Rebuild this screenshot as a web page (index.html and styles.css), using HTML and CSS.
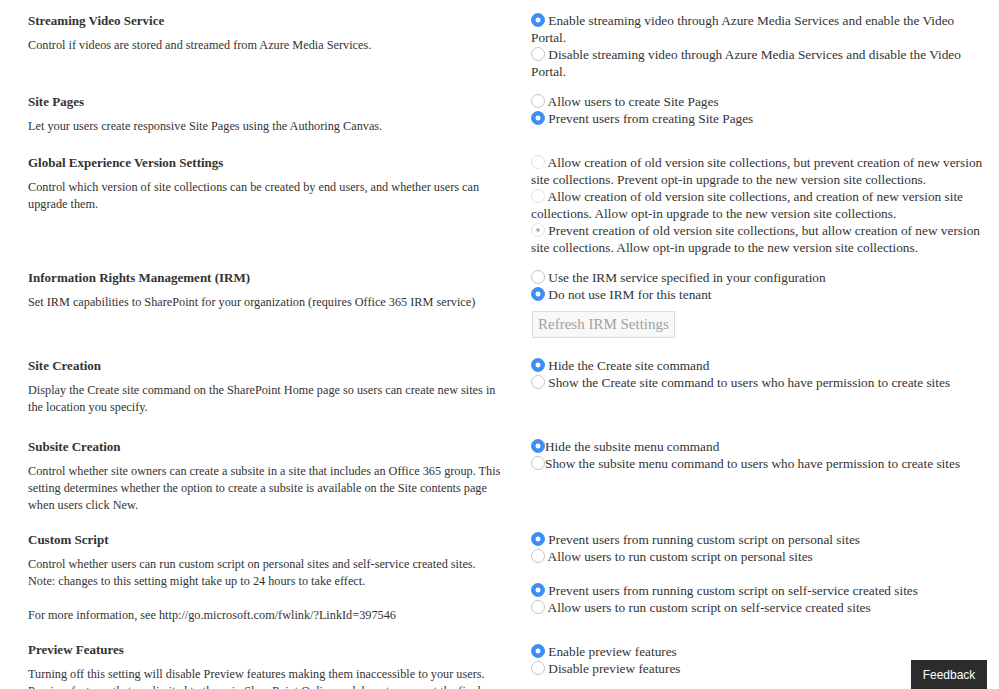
FILE: index.html
```html
<!DOCTYPE html>
<html lang="en">
<head>
    <meta charset="UTF-8">
    <meta name="viewport" content="width=device-width, initial-scale=1.0">
    <title>Settings</title>
    <link rel="stylesheet" href="styles.css">
</head>
<body>

    <div class="settings">

        <section class="setting">
            <div class="setting-info">
                <h3>Streaming Video Service</h3>
                <p>Control if videos are stored and streamed from Azure Media Services.</p>
            </div>
            <div class="setting-options">
                <label class="option"><input type="radio" name="video" checked> Enable streaming video through Azure Media Services and enable the Video Portal.</label>
                <label class="option"><input type="radio" name="video"> Disable streaming video through Azure Media Services and disable the Video Portal.</label>
            </div>
        </section>

        <section class="setting">
            <div class="setting-info">
                <h3>Site Pages</h3>
                <p>Let your users create responsive Site Pages using the Authoring Canvas.</p>
            </div>
            <div class="setting-options">
                <label class="option"><input type="radio" name="pages"> Allow users to create Site Pages</label>
                <label class="option"><input type="radio" name="pages" checked> Prevent users from creating Site Pages</label>
            </div>
        </section>

        <section class="setting">
            <div class="setting-info">
                <h3>Global Experience Version Settings</h3>
                <p>Control which version of site collections can be created by end users, and whether users can upgrade them.</p>
            </div>
            <div class="setting-options">
                <label class="option"><input type="radio" name="version" disabled> Allow creation of old version site collections, but prevent creation of new version site collections. Prevent opt-in upgrade to the new version site collections.</label>
                <label class="option"><input type="radio" name="version" disabled> Allow creation of old version site collections, and creation of new version site collections. Allow opt-in upgrade to the new version site collections.</label>
                <label class="option"><input type="radio" name="version" checked disabled> Prevent creation of old version site collections, but allow creation of new version site collections. Allow opt-in upgrade to the new version site collections.</label>
            </div>
        </section>

        <section class="setting">
            <div class="setting-info">
                <h3>Information Rights Management (IRM)</h3>
                <p>Set IRM capabilities to SharePoint for your organization (requires Office 365 IRM service)</p>
            </div>
            <div class="setting-options">
                <label class="option"><input type="radio" name="irm"> Use the IRM service specified in your configuration</label>
                <label class="option"><input type="radio" name="irm" checked> Do not use IRM for this tenant</label>
                <button class="refresh-btn" disabled>Refresh IRM Settings</button>
            </div>
        </section>

        <section class="setting">
            <div class="setting-info">
                <h3>Site Creation</h3>
                <p>Display the Create site command on the SharePoint Home page so users can create new sites in the location you specify.</p>
            </div>
            <div class="setting-options">
                <label class="option"><input type="radio" name="sitecreate" checked> Hide the Create site command</label>
                <label class="option"><input type="radio" name="sitecreate"> Show the Create site command to users who have permission to create sites</label>
            </div>
        </section>

        <section class="setting subsite">
            <div class="setting-info">
                <h3>Subsite Creation</h3>
                <p>Control whether site owners can create a subsite in a site that includes an Office 365 group. This setting determines whether the option to create a subsite is available on the Site contents page when users click New.</p>
            </div>
            <div class="setting-options tight">
                <label class="option"><input type="radio" name="subsite" checked>Hide the subsite menu command</label>
                <label class="option"><input type="radio" name="subsite">Show the subsite menu command to users who have permission to create sites</label>
            </div>
        </section>

        <section class="setting custom-script">
            <div class="setting-info">
                <h3>Custom Script</h3>
                <p>Control whether users can run custom script on personal sites and self-service created sites.<br>
                Note: changes to this setting might take up to 24 hours to take effect.<br><br>
                For more information, see http://go.microsoft.com/fwlink/?LinkId=397546</p>
            </div>
            <div class="setting-options">
                <div class="option-group">
                    <label class="option"><input type="radio" name="script-personal" checked> Prevent users from running custom script on personal sites</label>
                    <label class="option"><input type="radio" name="script-personal"> Allow users to run custom script on personal sites</label>
                </div>
                <div class="option-group">
                    <label class="option"><input type="radio" name="script-self" checked> Prevent users from running custom script on self-service created sites</label>
                    <label class="option"><input type="radio" name="script-self"> Allow users to run custom script on self-service created sites</label>
                </div>
            </div>
        </section>

        <section class="setting">
            <div class="setting-info">
                <h3>Preview Features</h3>
                <p>Turning off this setting will disable Preview features making them inaccessible to your users. Preview features that are limited to those in SharePoint Online and do not represent the final product.</p>
            </div>
            <div class="setting-options preview">
                <label class="option"><input type="radio" name="preview" checked> Enable preview features</label>
                <label class="option"><input type="radio" name="preview"> Disable preview features</label>
            </div>
        </section>

    </div>

    <button class="feedback-btn">Feedback</button>

</body>
</html>
```

FILE: styles.css
```css
body {
    font-family: 'Liberation Serif', 'Times New Roman', serif;
    color: #333;
    background: #fff;
    margin: 0;
    padding: 0;
}

.settings {
    padding: 12px 10px 0 28px;
}

.setting {
    display: grid;
    grid-template-columns: 474px 1fr;
    column-gap: 29px;
    align-items: start;
}

.setting-info h3 {
    margin: 0;
    font-size: 13px;
    line-height: 17px;
    font-weight: bold;
}

.setting-info p {
    margin: 8px 0 19px;
    font-size: 12.25px;
    line-height: 17px;
}

.setting.subsite {
    margin-top: 3px;
}

.setting.subsite .setting-info p,
.setting.custom-script .setting-info p {
    margin-bottom: 17px;
}

.setting-options {
    padding-bottom: 13px;
    font-size: 13.3px;
    line-height: 17px;
}

.setting-options.preview {
    padding-top: 2px;
}

.option {
    display: block;
}

.option-group + .option-group {
    margin-top: 17px;
}

/* mac style radios */
.option input {
    appearance: none;
    -webkit-appearance: none;
    width: 14px;
    height: 14px;
    margin: 0;
    border: 1px solid #c6c6c6;
    border-radius: 50%;
    background: #fff;
    vertical-align: -2px;
    box-sizing: border-box;
}

.option input:checked {
    border-color: #3b8ff7;
    background: radial-gradient(circle, #fff 0 2.2px, #3b8ff7 2.8px);
}

.option input:disabled {
    border-color: #e3e3e3;
}

.option input:checked:disabled {
    background: radial-gradient(circle, #a8a8a8 0 1.4px, #fff 2px);
}

.refresh-btn {
    display: block;
    margin: 8px 0 6px 1px;
    height: 27px;
    padding: 0 5px;
    font-family: 'Liberation Serif', 'Times New Roman', serif;
    font-size: 15px;
    color: #a2a2a2;
    background: #f8f8f8;
    border: 1px solid #dcdcdc;
    border-radius: 0;
}

.feedback-btn {
    position: fixed;
    right: 12px;
    bottom: 0;
    width: 76px;
    height: 29px;
    padding: 0;
    background: #2c2c2c;
    color: #fff;
    border: none;
    font-family: 'Liberation Sans', Arial, sans-serif;
    font-size: 12px;
    font-weight: normal;
    cursor: pointer;
}
```
